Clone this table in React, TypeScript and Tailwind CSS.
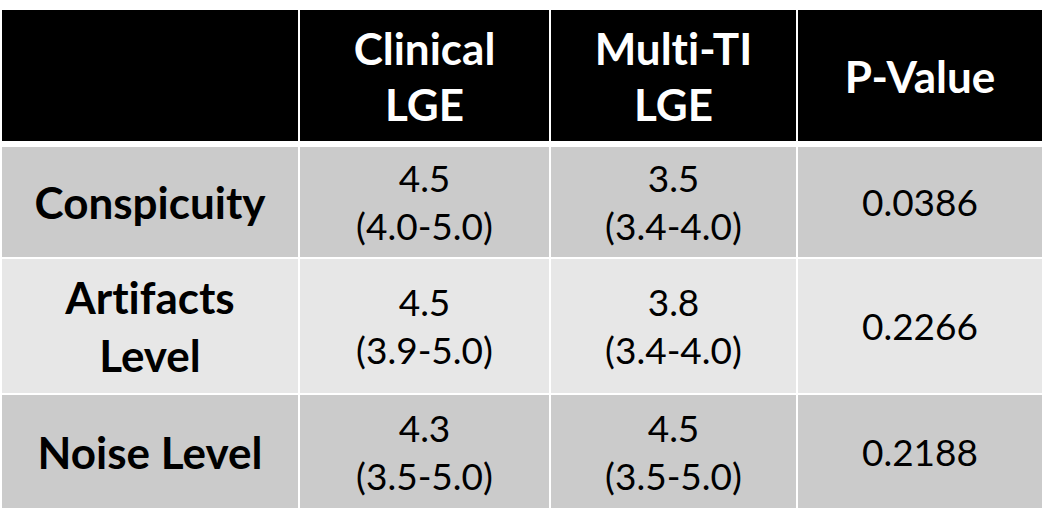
const cols = "grid grid-cols-[296px_249px_245px_244px] gap-x-[2px]";

const rows = [
  { label: ["Conspicuity"], a: ["4.5", "(4.0-5.0)"], b: ["3.5", "(3.4-4.0)"], p: "0.0386", h: "h-[110px]", bg: "bg-[#cbcbcb]" },
  { label: ["Artifacts", "Level"], a: ["4.5", "(3.9-5.0)"], b: ["3.8", "(3.4-4.0)"], p: "0.2266", h: "h-[134px]", bg: "bg-[#e7e7e7]" },
  { label: ["Noise Level"], a: ["4.3", "(3.5-5.0)"], b: ["4.5", "(3.5-5.0)"], p: "0.2188", h: "h-[113px]", bg: "bg-[#cbcbcb]" },
];

function Cell({ lines, className }: { lines: string[]; className: string }) {
  return (
    <div className={"flex flex-col items-center justify-center text-center " + className}>
      {lines.map((l) => (
        <span key={l}>{l}</span>
      ))}
    </div>
  );
}

export default function App() {
  return (
    <div className="h-[527px] w-[1049px] bg-white pl-[2px] pt-[10px] font-['Lato',sans-serif] text-black [font-variant-ligatures:none]">
      <div className={cols + " h-[131px] text-[44px] font-bold leading-[56px] text-white"}>
        <div className="bg-black" />
        <Cell lines={["Clinical", "LGE"]} className="bg-black" />
        <Cell lines={["Multi-TI", "LGE"]} className="bg-black" />
        <Cell lines={["P-Value"]} className="bg-black" />
      </div>
      <div className="mt-[6px] flex flex-col gap-y-[2px]">
        {rows.map((r) => (
          <div key={r.p} className={cols + " " + r.h}>
            <Cell lines={r.label} className={r.bg + " text-[44px] font-bold leading-[58px]"} />
            <Cell lines={r.a} className={r.bg + " text-[37px] leading-[48px]"} />
            <Cell lines={r.b} className={r.bg + " text-[37px] leading-[48px]"} />
            <Cell lines={[r.p]} className={r.bg + " text-[37px] leading-[48px]"} />
          </div>
        ))}
      </div>
    </div>
  );
}
